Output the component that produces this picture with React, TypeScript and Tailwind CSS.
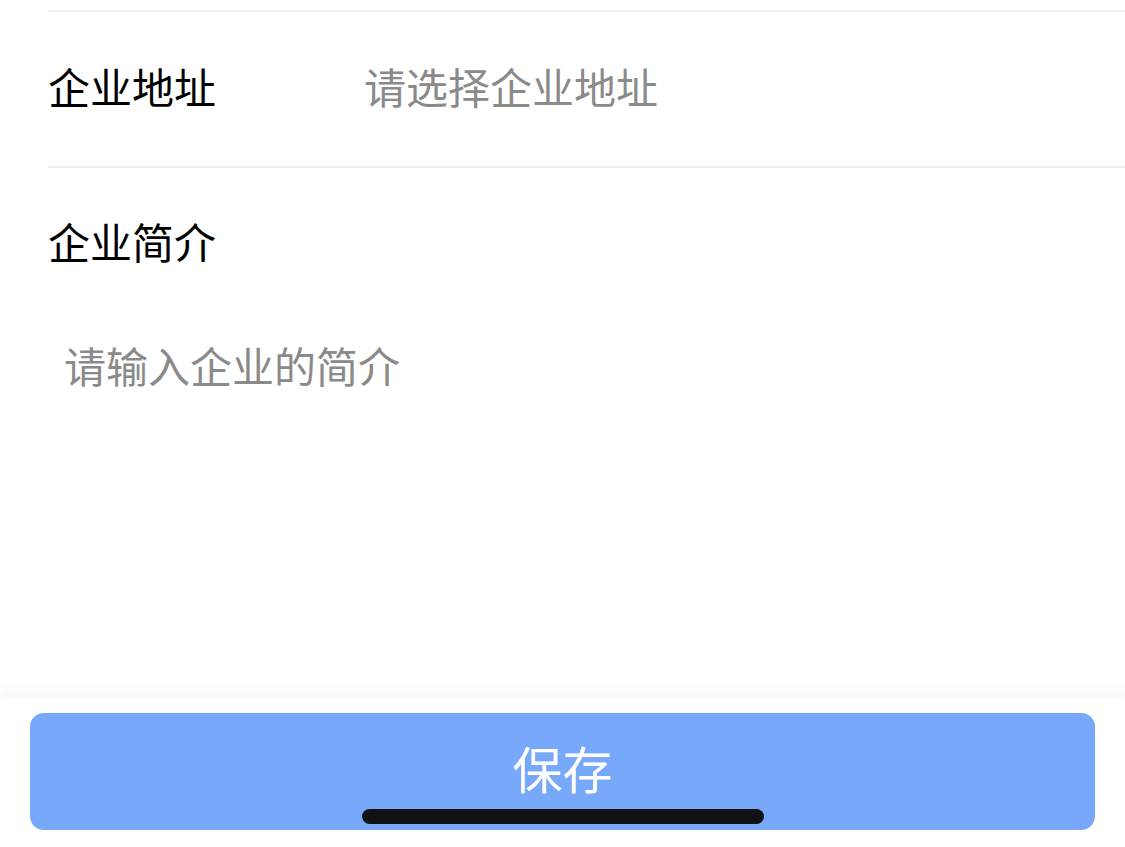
import React from "react";

export default function App() {
  const font = { fontFamily: '"Noto Sans CJK SC", "Noto Sans", sans-serif' };
  return (
    <div className="relative flex h-[847px] w-[1125px] flex-col overflow-hidden bg-white" style={font}>
      <div className="mt-[10px] ml-[48px] h-[2px] bg-[#efefef]" />
      <div className="ml-[48px] flex h-[154px] items-center pb-[7px]">
        <div className="w-[316px] text-[42px] leading-[60px] text-black">企业地址</div>
        <div className="text-[42px] leading-[60px] text-[#8a8a8a]">请选择企业地址</div>
      </div>
      <div className="ml-[48px] h-[2px] bg-[#efefef]" />
      <div className="ml-[48px] mt-[43px] text-[42px] leading-[60px] text-black">企业简介</div>
      <div className="ml-[64px] mt-[64px] text-[42px] leading-[60px] text-[#8a8a8a]">请输入企业的简介</div>
      <div className="flex-1" />
      <div className="h-[150px] bg-white px-[30px] pt-[16px] shadow-[0_-6px_14px_rgba(0,0,0,0.04)]">
        <div className="flex h-[117px] items-center justify-center rounded-[14px] bg-[#78a8fa]">
          <span className="-mt-[10px] text-[50px] leading-[60px] text-white">保存</span>
        </div>
      </div>
      <div className="absolute left-[362px] top-[809px] h-[15px] w-[402px] rounded-full bg-[#111214]" />
    </div>
  );
}
